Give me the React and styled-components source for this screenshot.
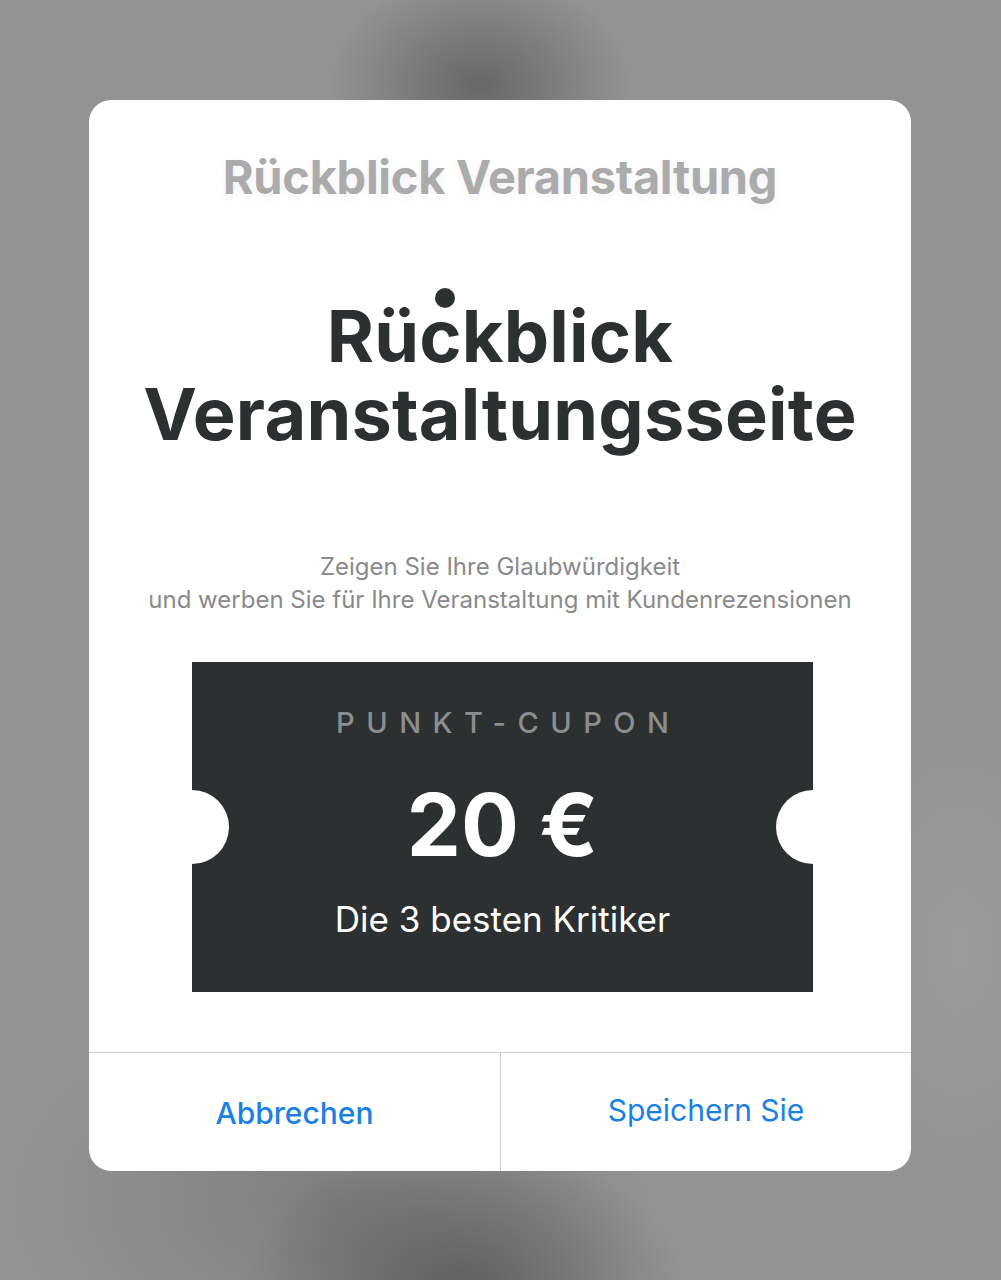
import React from 'react'
import styled, { createGlobalStyle } from 'styled-components'

const GlobalStyle = createGlobalStyle`
	html, body {
		margin: 0;
		padding: 0;
	}
	body {
		font-family: Inter, "Noto Sans", "Liberation Sans", sans-serif;
		background: #939393;
	}
`

function App() {
	return (
		<>
			<GlobalStyle />
			<Backdrop>
				<Modal>
					<TopTitle>Rückblick Veranstaltung</TopTitle>
					<Heading>
						<Dot />
						Rückblick
						<br />
						Veranstaltungsseite
					</Heading>
					<Subtitle>
						Zeigen Sie Ihre Glaubwürdigkeit
						<br />
						und werben Sie für Ihre Veranstaltung mit Kundenrezensionen
					</Subtitle>
					<Coupon>
						<CouponLabel>PUNKT-CUPON</CouponLabel>
						<CouponValue>20 €</CouponValue>
						<CouponText>Die 3 besten Kritiker</CouponText>
					</Coupon>
					<Footer>
						<Action strong>Abbrechen</Action>
						<Action>Speichern Sie</Action>
					</Footer>
				</Modal>
			</Backdrop>
		</>
	)
}

const Backdrop = styled.div`
	min-height: 1280px;
	box-sizing: border-box;
	padding: 100px 0 0 89px;
	display: flex;
	align-items: flex-start;
	background:
		radial-gradient(ellipse 150px 115px at 480px 85px, rgba(60, 60, 60, 0.5), rgba(60, 60, 60, 0) 100%),
		radial-gradient(ellipse 220px 150px at 465px 1290px, rgba(60, 60, 60, 0.55), rgba(60, 60, 60, 0) 100%),
		radial-gradient(ellipse 320px 200px at 330px 1200px, rgba(80, 80, 80, 0.3), rgba(80, 80, 80, 0) 100%),
		radial-gradient(ellipse 120px 220px at 960px 950px, rgba(170, 170, 170, 0.35), rgba(170, 170, 170, 0) 100%),
		#939393;
`

const Modal = styled.div`
	width: 822px;
	height: 1071px;
	box-sizing: border-box;
	background: #fff;
	border-radius: 22px;
	display: flex;
	flex-direction: column;
	align-items: center;
	overflow: hidden;
	padding-top: 48px;
`

const TopTitle = styled.h2`
	margin: 0;
	font-size: 47px;
	line-height: 58px;
	font-weight: 700;
	letter-spacing: -0.3px;
	color: #ababab;
	text-align: center;
	text-shadow: 0 3px 8px rgba(0, 0, 0, 0.06);
`

const Heading = styled.h1`
	position: relative;
	align-self: stretch;
	margin: 91px 0 0;
	font-size: 72px;
	line-height: 78px;
	font-weight: 700;
	color: #2d3031;
	text-align: center;
	letter-spacing: 0.2px;
`

const Dot = styled.span`
	position: absolute;
	left: 346px;
	top: -9px;
	width: 20px;
	height: 20px;
	border-radius: 50%;
	background: #2d3031;
`

const Subtitle = styled.p`
	margin: 97px 0 0;
	font-size: 24px;
	line-height: 33px;
	color: #8a8a8a;
	text-align: center;
`

const Coupon = styled.div`
	position: relative;
	margin: 46px 0 0 5px;
	width: 621px;
	height: 330px;
	box-sizing: border-box;
	background: #2d3031;
	display: flex;
	flex-direction: column;
	align-items: center;
	padding-top: 41px;
	overflow: hidden;

	&::before,
	&::after {
		content: '';
		position: absolute;
		top: 50%;
		width: 74px;
		height: 74px;
		margin-top: -37px;
		border-radius: 50%;
		background: #fff;
	}
	&::before {
		left: -37px;
	}
	&::after {
		right: -37px;
	}
`

const CouponLabel = styled.div`
	font-size: 29px;
	line-height: 40px;
	font-weight: 500;
	letter-spacing: 11.5px;
	margin-right: -11.5px;
	color: #8b8e8f;
`

const CouponValue = styled.div`
	margin-top: 32px;
	font-size: 86px;
	line-height: 100px;
	font-weight: 700;
	color: #fff;
`

const CouponText = styled.div`
	margin-top: 22px;
	font-size: 35px;
	line-height: 44px;
	font-weight: 400;
	color: #fff;
`

const Footer = styled.div`
	margin-top: auto;
	align-self: stretch;
	height: 118px;
	display: grid;
	grid-template-columns: 411px 1fr;
	border-top: 1.5px solid #cfcfcf;
`

const Action = styled.button`
	border: none;
	background: none;
	font-family: inherit;
	font-size: 30px;
	font-weight: ${props => (props.strong ? 500 : 400)};
	color: #1a80e6;
	padding: ${props => (props.strong ? '2px 0 0' : '0 0 4px')};
	cursor: pointer;
	& + & {
		border-left: 1.5px solid #cfcfcf;
	}
`

export default App
